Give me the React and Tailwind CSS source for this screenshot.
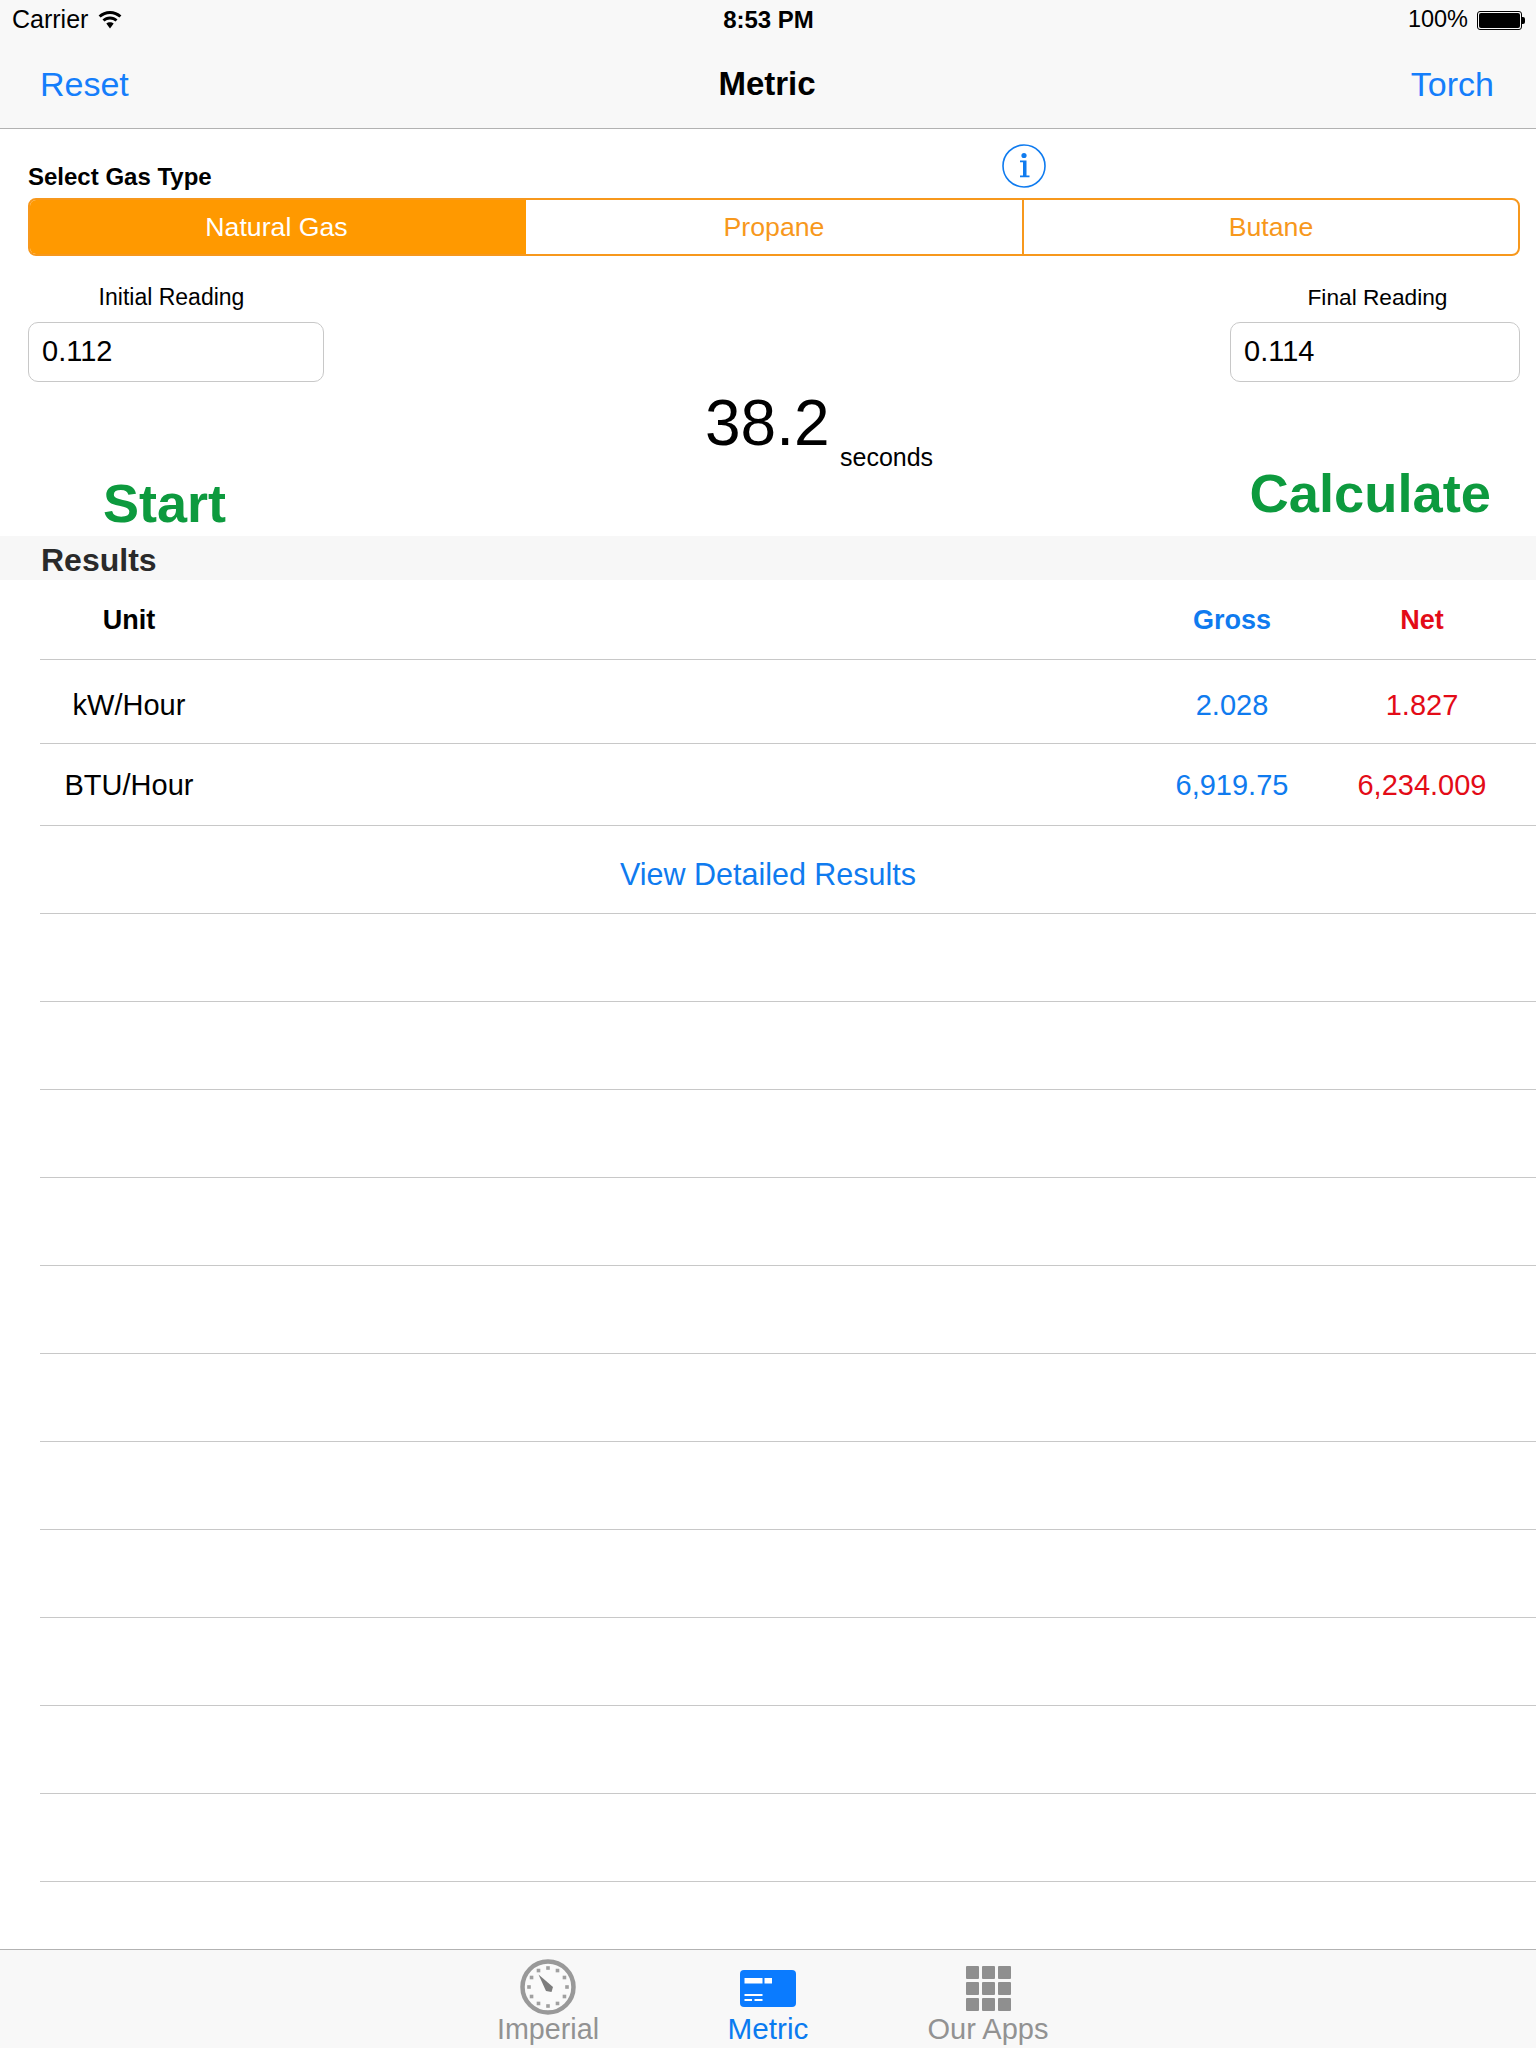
const font = { fontFamily: '"Liberation Sans", Arial, sans-serif' }

const WifiIcon = () => (
  <svg width="24" height="18" viewBox="0 0 24 18" className="ml-[10px]">
    <path d="M12 0C7.6 0 3.6 1.7.6 4.5l2 2.1C5.1 4.3 8.4 2.9 12 2.9s6.9 1.4 9.4 3.7l2-2.1C20.4 1.7 16.4 0 12 0z" fill="#000" />
    <path d="M12 5.6c-2.9 0-5.5 1.1-7.5 2.9l2 2.1c1.5-1.3 3.4-2.1 5.5-2.1s4 .8 5.5 2.1l2-2.1c-2-1.8-4.6-2.9-7.5-2.9z" fill="#000" />
    <path d="M12 11.2c-1.4 0-2.7.5-3.7 1.4L12 17.6l3.7-5c-1-.9-2.3-1.4-3.7-1.4z" fill="#000" />
  </svg>
)

const BatteryIcon = () => (
  <div className="flex items-center ml-[9px]">
    <div className="w-[45px] h-[19px] border border-black rounded-[3px] p-[1px]">
      <div className="w-full h-full bg-black rounded-[2px]" />
    </div>
    <div className="w-[3px] h-[7px] bg-black rounded-r-[2px]" />
  </div>
)

const InfoIcon = () => (
  <svg width="44" height="44" viewBox="0 0 44 44">
    <circle cx="22" cy="22" r="21" fill="none" stroke="#0f7bef" strokeWidth="1.6" />
    <circle cx="22" cy="11.5" r="2.6" fill="#0f7bef" />
    <path d="M18 16.5h6.5v15h3v1.8h-9.5v-1.8h3v-13.2h-3z" fill="#0f7bef" />
  </svg>
)

const ClockIcon = () => {
  const dots = Array.from({ length: 12 }, (_, i) => {
    const a = (i * Math.PI) / 6
    return { x: 28 + 19 * Math.sin(a), y: 28 - 19 * Math.cos(a) }
  })
  return (
    <svg width="56" height="56" viewBox="0 0 56 56">
      <circle cx="28" cy="28" r="25.5" fill="#fafafa" stroke="#999" strokeWidth="4.5" />
      {dots.map((d, i) => (
        <rect key={i} x={d.x - 1.8} y={d.y - 1.8} width="3.6" height="3.6" fill="#a0a0a0" />
      ))}
      <path d="M18.5 15.5L33 28 31.5 33 26 32z" fill="#7d7d7d" />
    </svg>
  )
}

const CardIcon = () => (
  <svg width="56" height="38" viewBox="0 0 56 38">
    <rect x="0" y="0" width="56" height="37" rx="4" fill="#0a7bff" />
    <rect x="4.5" y="8" width="18" height="5.5" fill="#fff" />
    <rect x="24.5" y="8" width="7.5" height="5.5" fill="#fff" />
    <rect x="4.5" y="24" width="18" height="2" fill="#fff" />
    <rect x="4.5" y="29" width="7.5" height="2" fill="#fff" />
    <rect x="14.5" y="29" width="8" height="2" fill="#fff" />
  </svg>
)

const AppsIcon = () => (
  <div className="grid grid-cols-3 gap-[3px] w-[45px]">
    {Array.from({ length: 9 }).map((_, i) => (
      <div key={i} className="h-[13px] bg-[#8f8f8f] rounded-[1px]" />
    ))}
  </div>
)

const rows = [
  { unit: "kW/Hour", gross: "2.028", net: "1.827", height: "h-[84px] pt-[8px]" },
  { unit: "BTU/Hour", gross: "6,919.75", net: "6,234.009", height: "h-[82px] pt-[2px]" },
]

const tabs = [
  { label: "Imperial", icon: <ClockIcon />, color: "text-[#929292] text-[28.7px]", box: "h-[61px] pt-[9px]" },
  { label: "Metric", icon: <CardIcon />, color: "text-[#0a7bf0] text-[29.7px]", box: "h-[61px] pt-[20px]" },
  { label: "Our Apps", icon: <AppsIcon />, color: "text-[#929292] text-[29px]", box: "h-[61px] pt-[16px]" },
]

const App = () => {
  return (
    <div className="w-[1536px] h-[2048px] bg-white flex flex-col overflow-hidden text-black" style={font}>
      {/* Status bar + nav */}
      <div className="bg-[#f8f8f8] border-b border-[#b2b2b2] h-[129px]">
        <div className="grid grid-cols-3 h-[40px] items-center pl-[12px] pr-[11px] text-[24px]">
          <div className="flex items-center">
            <span className="text-[25px]">Carrier</span>
            <WifiIcon />
          </div>
          <div className="text-center font-bold">8:53 PM</div>
          <div className="flex items-center justify-end">
            <span className="text-[23.5px]">100%</span>
            <BatteryIcon />
          </div>
        </div>
        <div className="grid grid-cols-3 h-[88px] items-center pl-[40px] pr-[42px] text-[34px]">
          <div className="text-[#157efb]">Reset</div>
          <div className="text-center font-bold text-[33px]">Metric</div>
          <div className="text-right text-[#157efb]">Torch</div>
        </div>
      </div>

      <div className="flex-1 flex flex-col">
        <div className="pl-[28px] pr-[16px]">
          <div className="flex h-[69px]">
            <div className="w-[974px] mt-[35px] text-[24px] leading-[26px] font-bold">Select Gas Type</div>
            <div className="mt-[15px]">
              <InfoIcon />
            </div>
          </div>

          {/* Gas type segmented control */}
          <div className="grid grid-cols-3 h-[58px] border-2 border-[#f7981c] rounded-[8px] overflow-hidden text-[26.7px] text-[#f7981c]">
            <div className="flex items-center justify-center bg-[#ff9900] text-white pr-[3px]">Natural Gas</div>
            <div className="flex items-center justify-center">Propane</div>
            <div className="flex items-center justify-center border-l-2 border-[#f7981c]">Butane</div>
          </div>

          <div className="flex justify-between">
            <div className="w-[296px]">
              <div className="mt-[28px] mb-[12px] pr-[9px] text-center text-[23px] leading-[26px]">Initial Reading</div>
              <div className="h-[60px] border border-[#c8c8c8] rounded-[10px] pl-[13px] flex items-center text-[29px]">0.112</div>
            </div>
            <div className="w-[290px]">
              <div className="mt-[28px] mb-[12px] pl-[5px] text-center text-[22.7px] leading-[26px]">Final Reading</div>
              <div className="h-[60px] border border-[#c8c8c8] rounded-[10px] pl-[13px] flex items-center text-[29px]">0.114</div>
            </div>
          </div>

          {/* Timer + actions */}
          <div className="grid grid-cols-[677px_135px_1fr_auto] h-[154px]">
            <div className="pl-[75px] pt-[91px] text-[54px] leading-[60px] font-bold text-[#0d9a3e]">Start</div>
            <div className="pt-[6px] text-[64px] leading-[70px]">38.2</div>
            <div className="pt-[62px] text-[25px] leading-[26px]">seconds</div>
            <div className="pr-[29px] pt-[82px] text-[54.3px] leading-[60px] font-bold text-[#0d9a3e]">Calculate</div>
          </div>
        </div>

        <div className="h-[44px] bg-[#f7f7f7] pl-[41px] pt-[3px] flex items-center text-[32px] font-bold text-[#2a2a2a]">Results</div>

        {/* Results table */}
        <div className="ml-[40px] flex-1 flex flex-col">
          <div className="flex h-[80px] pt-[2px] items-center border-b border-[#c8c8c8] text-[27px] font-bold">
            <div className="w-[178px] text-center">Unit</div>
            <div className="flex-1" />
            <div className="w-[190px] text-center text-[#0f7bef]">Gross</div>
            <div className="w-[190px] text-center text-[#e30b17]">Net</div>
            <div className="w-[19px]" />
          </div>
          {rows.map((row) => (
            <div key={row.unit} className={`flex ${row.height} items-center border-b border-[#c8c8c8] text-[29px]`}>
              <div className="w-[178px] text-center">{row.unit}</div>
              <div className="flex-1" />
              <div className="w-[190px] text-center text-[#0f7bef]">{row.gross}</div>
              <div className="w-[190px] text-center text-[#e30b17]">{row.net}</div>
              <div className="w-[19px]" />
            </div>
          ))}
          <div className="h-[88px] border-b border-[#c8c8c8] flex items-center justify-center pr-[40px] pt-[10px] text-[30.5px] text-[#0f7bef]">
            View Detailed Results
          </div>
          {Array.from({ length: 11 }).map((_, i) => (
            <div key={i} className="h-[88px] shrink-0 border-b border-[#c8c8c8]" />
          ))}
        </div>
      </div>

      {/* Tab bar */}
      <div className="h-[99px] shrink-0 bg-[#f8f8f8] border-t border-[#b2b2b2]">
        <div className="grid grid-cols-3 w-[660px] mx-auto">
          {tabs.map((tab) => (
            <div key={tab.label} className="flex flex-col items-center">
              <div className={tab.box}>{tab.icon}</div>
              <div className={`leading-[36px] ${tab.color}`}>{tab.label}</div>
            </div>
          ))}
        </div>
      </div>
    </div>
  )
}

export default App
